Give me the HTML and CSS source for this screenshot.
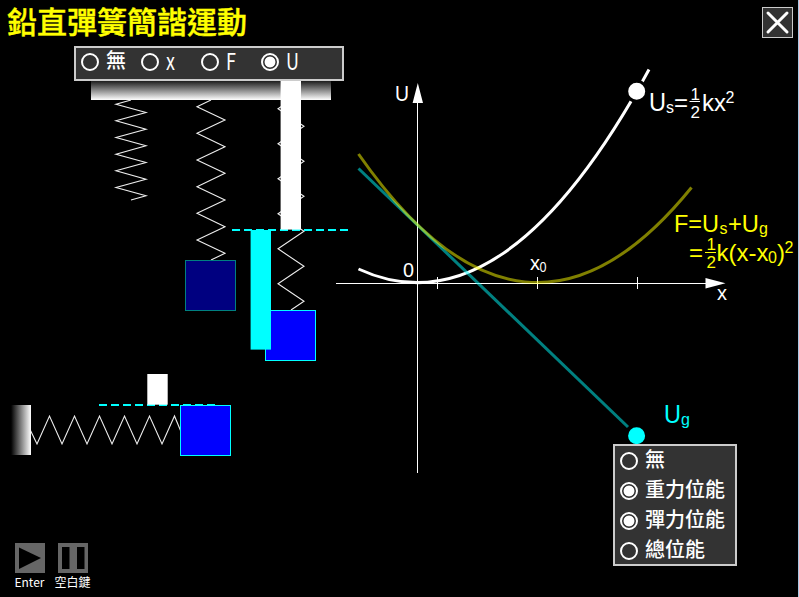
FILE: index.html
```html
<!DOCTYPE html>
<html lang="zh-Hant">
<head>
<meta charset="utf-8">
<title>鉛直彈簧簡諧運動</title>
<link rel="stylesheet" href="styles.css">
</head>
<body>
<main class="stage">
  <svg class="scene" viewBox="0 0 799 597" width="799" height="597">
    <defs>
      <linearGradient id="ceiling" x1="0" y1="0" x2="0" y2="1"><stop offset="0" stop-color="#111"/><stop offset="1" stop-color="#fff"/></linearGradient>
      <linearGradient id="wall" x1="0" y1="0" x2="1" y2="0"><stop offset="0" stop-color="#000"/><stop offset="1" stop-color="#fff"/></linearGradient>
    </defs>

    <!-- vertical springs -->
    <rect x="91" y="80" width="240" height="20" fill="url(#ceiling)"/>
    <g class="spring">
      <path d="M131 100L116 104.2L146 112.5L116 120.8L146 129.2L116 137.5L146 145.8L116 154.2L146 162.5L116 170.8L146 179.2L116 187.5L146 195.8L131 200"/>
      <path d="M211 100L197 106.7L225 120L197 133.3L225 146.7L197 160L225 173.3L197 186.7L225 200L197 213.3L225 226.7L197 240L225 253.3L211 260"/>
      <path d="M291 100L278 108.8L304 126.3L278 143.8L304 161.3L278 178.8L304 196.3L278 213.8L304 231.3L278 248.8L304 266.3L278 283.8L304 301.3L291 310"/>
      <path d="M30.5 430.5L37 444L49.5 416L62 444L74.5 416L87 444L99.5 416L112 444L124.5 416L137 444L149.5 416L162 444L174.500 416L180.500 430.500"/>
    </g>
    <path class="level" d="M232 230H349M99 405H215"/>
    <rect x="185.500" y="260.500" width="50" height="50" fill="#000080" stroke="#008080"/>
    <rect x="265.500" y="310.500" width="50" height="50" fill="#00f" stroke="#0ff"/>
    <rect x="250.600" y="230" width="20.400" height="119.600" fill="#0ff"/>
    <rect x="280.600" y="80" width="20.400" height="149.600" fill="#fff"/>

    <!-- horizontal spring -->
    <rect x="11" y="405" width="20" height="50" fill="url(#wall)"/>
    <rect x="147.300" y="374" width="20.400" height="30.700" fill="#fff"/>
    <rect x="180.500" y="405.500" width="50" height="50" fill="#00f" stroke="#0ff"/>

    <!-- energy graph -->
    <path class="axis" d="M417.500 100V473M336 283.500H706M437.500 277V289M537.500 277V289M637.500 277V289"/>
    <path d="M417.800 83L423 103H412.600ZM725.500 283.300L705.500 288.500V278Z" fill="#fff"/>
    <path class="curve" stroke="#fff" d="M358.500 269Q504 336.500 649 69.500"/>
    <path class="curve half" stroke="#0ff" d="M358.500 168.500L628 427"/>
    <path class="curve half" stroke="#ff0" d="M358.500 154Q525 393 691.500 187.500"/>
    <circle cx="636.700" cy="91.300" r="10" fill="#fff" stroke="#000" stroke-width="3"/>
    <circle cx="636.600" cy="435.700" r="8.500" fill="#0ff"/>

    <g class="label">
      <text x="395" y="101" font-size="22" textLength="14" lengthAdjust="spacingAndGlyphs">U</text>
      <text x="403" y="277" font-size="21" textLength="11" lengthAdjust="spacingAndGlyphs">0</text>
      <text x="530" y="270" font-size="20">x</text>
      <text x="539.500" y="272" font-size="15" textLength="7" lengthAdjust="spacingAndGlyphs">0</text>
      <text x="717" y="300" font-size="20">x</text>
      <text x="649" y="111" font-size="25" textLength="17" lengthAdjust="spacingAndGlyphs">U</text>
      <text x="666" y="112.500" font-size="16">s</text>
      <text x="674" y="111" font-size="24">=</text>
      <text x="690.500" y="99.500" font-size="17">1</text>
      <text x="690.500" y="118" font-size="17">2</text>
      <text x="702" y="111" font-size="24">kx</text>
      <text x="725.500" y="103" font-size="16">2</text>
      <path d="M689.500 101.500H700" stroke="#fff"/>
    </g>
    <g class="label yellow">
      <text x="674" y="232" font-size="24" textLength="45" lengthAdjust="spacingAndGlyphs">F=U</text>
      <text x="719.500" y="233.500" font-size="16">s</text>
      <text x="728" y="232" font-size="24" textLength="31" lengthAdjust="spacingAndGlyphs">+U</text>
      <text x="759" y="233.500" font-size="16">g</text>
      <text x="689" y="261" font-size="24">=</text>
      <text x="706.500" y="250" font-size="17">1</text>
      <text x="706.500" y="268" font-size="17">2</text>
      <text x="716.500" y="261" font-size="24">k(x-x</text>
      <text x="768" y="262.500" font-size="16">0</text>
      <text x="777" y="261" font-size="24">)</text>
      <text x="784.500" y="253" font-size="16">2</text>
      <path d="M705 252.500H716" stroke="#ff0"/>
    </g>
    <g class="label cyan">
      <text x="664" y="423" font-size="25" textLength="17" lengthAdjust="spacingAndGlyphs">U</text>
      <text x="681" y="425" font-size="16">g</text>
    </g>
  </svg>

  <h1 class="title">鉛直彈簧簡諧運動</h1>
  <button class="close" aria-label="關閉"><svg width="28" height="28" viewBox="0 0 28 28"><path d="M4 4L23 23M23 4L4 23"/></svg></button>

  <div class="panel modes">
    <label class="option"><i class="radio"></i><span>無</span></label>
    <label class="option"><i class="radio"></i><span class="latin">x</span></label>
    <label class="option"><i class="radio"></i><span class="latin">F</span></label>
    <label class="option"><i class="radio on"></i><span class="latin">U</span></label>
  </div>

  <div class="panel energies">
    <label class="option"><i class="radio"></i><span>無</span></label>
    <label class="option"><i class="radio on"></i><span>重力位能</span></label>
    <label class="option"><i class="radio on"></i><span>彈力位能</span></label>
    <label class="option"><i class="radio"></i><span>總位能</span></label>
  </div>

  <div class="controls">
    <div class="control"><svg width="30" height="30"><rect width="30" height="30" fill="#666"/><path d="M4 4.500L26 15L4 26Z" fill="#000"/></svg><span>Enter</span></div>
    <div class="control"><svg width="30" height="30"><rect width="30" height="30" fill="#666"/><path d="M4 4H11.500V26H4ZM19 4H26.500V26H19Z" fill="#000"/></svg><span>空白鍵</span></div>
  </div>
</main>
</body>
</html>
```
FILE: styles.css
```css
* { box-sizing: border-box; }
body { margin: 0; background: #000; color: #fff; font-family: "Noto Sans CJK TC", sans-serif; }
.stage { position: relative; width: 799px; height: 597px; overflow: hidden; background: #000; border-right: 1px solid #a9c8e4; }
.scene { position: absolute; left: 0; top: 0; }
.spring path { fill: none; stroke: #eee; stroke-width: 1.1; }
.level { stroke: #0ff; stroke-width: 2; stroke-dasharray: 8 4; }
.axis { fill: none; stroke: #fff; stroke-width: 1; }
.curve { fill: none; stroke-width: 3; }
.half { opacity: .5; }
.label { fill: #fff; font-family: "Liberation Sans", Arial, sans-serif; }
.yellow { fill: #ff0; }
.cyan { fill: #0ff; }
.title { position: absolute; left: 7px; top: 0; margin: 0; color: #ff0; font-size: 30px; line-height: 40px; font-weight: 500; white-space: nowrap; -webkit-text-stroke: .4px #ff0; }
.close { position: absolute; left: 762px; top: 7px; width: 31px; height: 31px; padding: 0; display: grid; place-items: center; background: #333; border: 1px solid #ccc; }
.close path { stroke: #fff; stroke-width: 3; stroke-linecap: round; }
.panel { position: absolute; background: #333; border: 2px solid #ccc; display: flex; }
.option { display: flex; flex: none; align-items: center; font-size: 20px; line-height: 30px; font-weight: 500; white-space: nowrap; }
.radio { flex: none; width: 18px; height: 18px; border: 2px solid #fff; border-radius: 50%; }
.radio.on { background: radial-gradient(circle, #fff 5px, #333 5.8px); }
.modes { left: 74px; top: 46px; width: 270px; height: 35px; padding: 0 0 0 4.5px; }
.modes .option { width: 60px; height: 28px; gap: 7.5px; line-height: 28px; }
.modes .option span { margin-top: -4px; }
.modes .latin { font-size: 23px; font-weight: 400; transform: scaleX(.78); transform-origin: left; }
.energies { left: 613px; top: 444px; width: 124px; height: 122px; flex-direction: column; padding-left: 4.5px; }
.energies .option { height: 30px; gap: 7.5px; }
.energies .radio { margin-top: -1px; }
.energies .option span { margin-top: -5px; }
.controls { position: absolute; left: 8px; top: 543px; display: flex; }
.control { width: 43px; display: flex; flex-direction: column; align-items: center; font-size: 12px; line-height: 18px; white-space: nowrap; }
```
